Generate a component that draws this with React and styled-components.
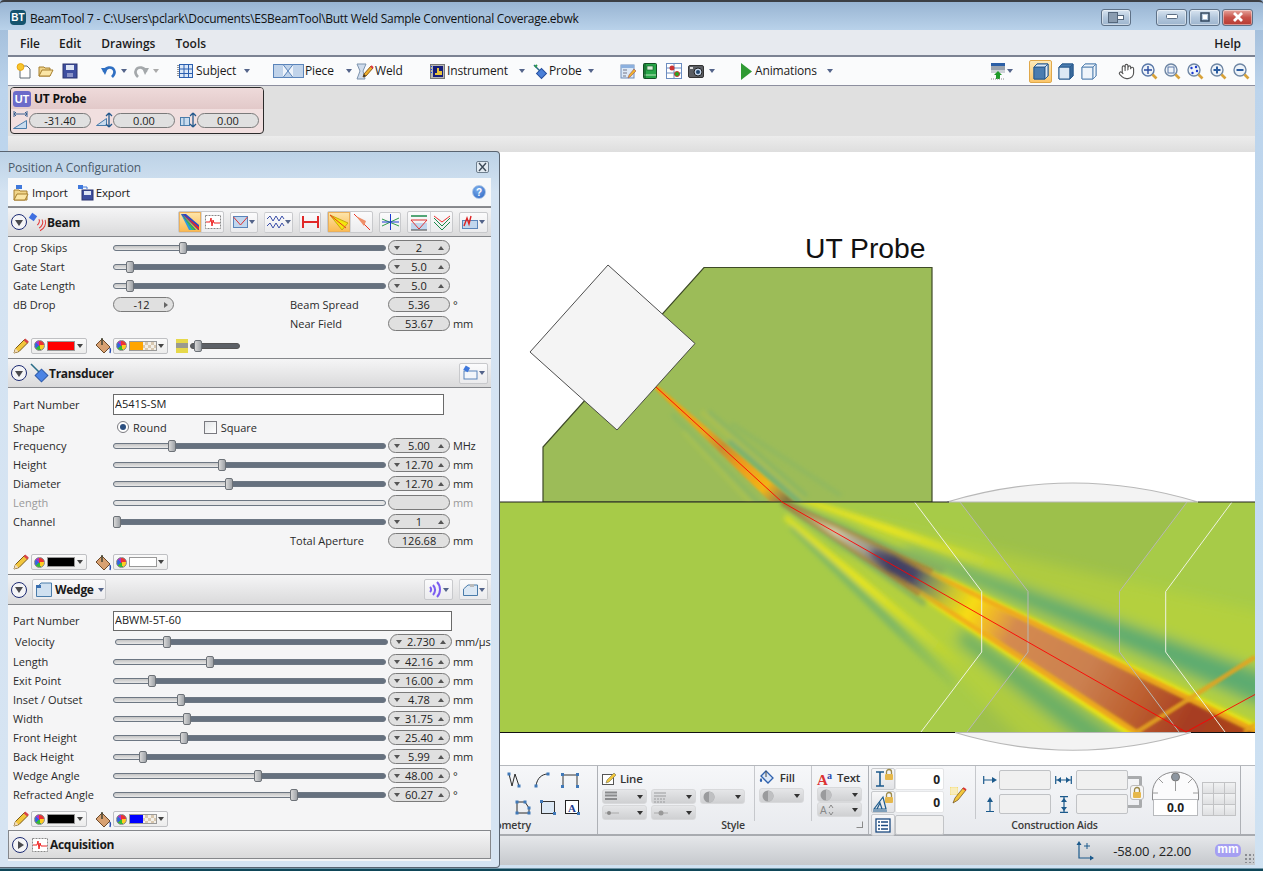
import React from "react";
import styled, { createGlobalStyle, css } from "styled-components";
import { Hand } from "lucide-react";

const Global = createGlobalStyle`
  html, body { margin: 0; padding: 0; background: #0c3a4a; }
  body { font-family: "Open Sans", "Noto Sans", "Liberation Sans", sans-serif; font-size: 11px; color: #222; }
  * { box-sizing: border-box; }
`;

const Win = styled.div`
  position: relative; width: 1263px; height: 871px; overflow: hidden; display: flex; flex-direction: column;
  background: linear-gradient(180deg, #9ab6d4 0, #bcd4ec 90px, #c4dcf2 500px, #d0e2f2 868px, #0e4658 869px);
`;
const TitleBar = styled.div`
  height: 30px; flex: none; display: flex; align-items: center; padding: 2px 10px 0 10px;
  border-top: 2px solid #3c3f44; border-radius: 4px 4px 0 0;
  background: linear-gradient(180deg, #98b4d2, #b9d2ea);
`;
const AppBadge = styled.div`
  width: 16px; height: 15px; border-radius: 4px; background: #14536e; color: #fff; font: bold 10px "Liberation Sans", sans-serif;
  display: flex; align-items: center; justify-content: center; margin-right: 4px;
`;
const TitleText = styled.div`font-size: 12px; color: #111; letter-spacing: -0.27px; white-space: nowrap; flex: 1; padding-top: 2px;`;
const CapBtn = styled.div`
  width: ${p => p.$w || 31}px; height: 17px; margin-left: ${p => p.$ml || 2}px; border: 1px solid #5e7187; border-radius: 3px;
  display: flex; align-items: center; justify-content: center;
  background: ${p => p.$close ? "linear-gradient(180deg,#e6a59c,#c8534a 50%,#b53a32)" : "linear-gradient(180deg,#d8e4f0,#b3c7dc 50%,#9db5ce)"};
  box-shadow: inset 0 0 0 1px rgba(255,255,255,.45);
`;
const Body = styled.div`flex: 1; margin: 0 8px; display: flex; flex-direction: column; min-height: 0;`;
const MenuBar = styled.div`
  height: 27px; flex: none; display: flex; align-items: center; padding: 1px 14px 0 12px; background: #e7eaef; border-bottom: 2px solid #7b8292;
`;
const MenuItem = styled.div`
  font-size: 12px; font-weight: 600; color: #1c1c1c; margin-right: ${p => p.$mr}px;
  &:last-child { margin: 0 0 0 auto; }
`;
const Toolbar = styled.div`
  height: 29px; flex: none; display: flex; align-items: center; padding-left: 8px; background: #fafbfc; border-bottom: 1px solid #8d8f9f;
`;
const ToolCell = styled.div`width: ${p => p.$w}px; flex: none; display: flex; align-items: center;`;
const ToolLabel = styled.span`font-size: 12px; color: #1a1a1a; margin: 0 0 1px ${p => p.$ml ?? 3}px; white-space: nowrap; letter-spacing: -.15px;`;
const Caret = styled.i`
  display: block; flex: none; margin-left: ${p => p.$ml || 0}px; width: 0; height: 0;
  border: 3px solid transparent; border-bottom: 0; border-top: 4px solid ${p => p.$c || "#54648a"};
`;
const ActiveCell = styled.div`
  width: 23px; height: 23px; margin-left: -2px; margin-right: 6px; flex: none; display: flex; align-items: center; justify-content: center;
  border: 1px solid #e0a84a; border-radius: 2px; background: linear-gradient(180deg,#fde9b8,#fbc569);
`;
const ProbeBar = styled.div`height: 50px; flex: none; padding: 1px 2px; background: #e0e0e0;`;
const ProbeCard = styled.div`width: 254px; height: 47px; border: 1px solid #2b2b2b; border-radius: 4px; overflow: hidden; background: #f1dfdf;`;
const ProbeHead = styled.div`height: 21px; display: flex; align-items: center; padding-left: 2px; background: linear-gradient(180deg,#eedada,#e2c9c9);`;
const UTBadge = styled.div`
  width: 18px; height: 16px; border-radius: 3px; background: #6b6bc9; color: #fff; font: bold 11px "Liberation Sans", sans-serif;
  display: flex; align-items: center; justify-content: center;
`;
const ProbeName = styled.div`font-size: 12px; font-weight: 700; margin-left: 3px; color: #111; letter-spacing: -.25px;`;
const ProbeRow = styled.div`height: 22px; display: flex; align-items: center; padding-left: 2px;`;
const ProbeGap = styled.div`width: ${p => p.$w}px; flex: none;`;
const Strip = styled.div`height: 16px; flex: none; background: linear-gradient(180deg,#ececec,#dedede);`;
const Canvas = styled.div`flex: 1; background: #fff; min-height: 0;`;
const Ribbon = styled.div`
  height: 71px; flex: none; display: flex; border-top: 1px solid #b5b8bd; border-bottom: 2px solid #a8abb0;
  background: linear-gradient(180deg,#f6f7f9,#e8eaee);
`;
const RGroup = styled.div`
  width: ${p => p.$w}px; flex: none; display: flex; flex-direction: column; border-right: 1px solid #aeb1b6;
`;
const RContent = styled.div`flex: 1; display: flex; min-height: 0;`;
const RLabel = styled.div`
  height: 16px; flex: none; font-size: 10.5px; font-weight: 600; color: #3a3a3a; text-align: center; position: relative; line-height: 15px;
  letter-spacing: -.2px; ${p => p.$pl && css`padding-left: ${p.$pl}px;`}
`;
const GeomRows = styled.div`display: flex; flex-direction: column; gap: 11px; margin: 6px 0 0 auto; padding-right: 16px;`;
const GeomRow = styled.div`display: flex; gap: ${p => p.$g || 9}px; justify-content: flex-end; align-items: center;`;
const RSub = styled.div`
  width: ${p => p.$w}px; flex: none; display: flex; flex-direction: column; padding: ${p => p.$pt || 4}px 0 0 ${p => p.$pl || 4}px;
  border-right: ${p => p.$end ? "0" : "1px solid #c6c8cc"}; height: 55px;
`;
const RHead = styled.div`display: flex; align-items: center; gap: 3px; height: 19px; font-size: 11.5px; font-weight: 600; color: #333; letter-spacing: -.2px;`;
const DropRow = styled.div`display: flex; gap: 4px; margin-top: 1px;`;
const RDrop = styled.div`
  width: 45px; height: 15px; display: flex; align-items: center; justify-content: space-between; padding: 0 3px 0 2px; border-radius: 3px;
  background: linear-gradient(180deg,#e5e6e8,#cfd0d2); border: 1px solid #d8d9db;
`;
const Launcher = styled.div`position: absolute; right: 5px; top: 3px; width: 7px; height: 7px; border: 1px solid #8a8a8a; border-top-color: transparent; border-left-color: transparent;`;
const LockCol = styled.div`display: flex; flex-direction: column; gap: 1px; padding: 2px 0 0 2px; flex: none; width: 75px;`;
const LockRow = styled.div`display: flex; align-items: center;`;
const LockBtn = styled.div`
  width: 24px; height: 22px; display: flex; align-items: center; justify-content: center; border: 1px solid #c8cacd; border-radius: 2px;
  background: linear-gradient(180deg,#f7f7f8,#e2e3e6);
`;
const NumBox = styled.div`
  width: 49px; height: ${p => p.$off ? 20 : 22}px; display: flex; align-items: center; justify-content: flex-end; padding-right: 3px; font-size: 12px; font-weight: 700;
  background: ${p => p.$off ? "#f0f0f0" : "#fff"}; border: 1px solid ${p => p.$off ? "#c2c4c7" : "#e4e5e7"}; border-radius: 2px;
`;
const PencilCell = styled.div`width: 31px; flex: none; display: flex; align-items: center; justify-content: center; height: 52px; padding: 5px 2px 0 0;`;
const SubSep = styled.div`width: 1px; height: 53px; flex: none; background: #c6c8cc;`;
const AidGrid = styled.div`display: grid; grid-template-columns: 18px 52px 25px 52px; row-gap: 4px; align-items: center; justify-items: center; padding: 4px 0 0 5px; align-self: flex-start; flex: none;`;
const AidBox = styled.div`width: 52px; height: 20px; background: #f0f0f0; border: 1px solid #c0c2c5; border-radius: 2px;`;
const Bracket = styled.div`
  position: relative; width: 14px; height: 32px; margin-top: 10px; border: 3px solid #a9abad; border-left: 0; border-radius: 0 2px 2px 0; flex: none;
`;
const LockChip = styled.div`
  position: absolute; left: 2px; top: 6px; width: 14px; height: 15px; border-radius: 3px; background: #f5f5f5; border: 1px solid #bbb; display: flex; align-items: center; justify-content: center;
`;
const Dial = styled.div`display: flex; flex-direction: column; align-items: center; width: 47px; margin: 5px 0 0 10px; flex: none;`;
const DialValue = styled.div`
  width: 45px; height: 17px; background: #fff; border: 1px solid #b8babd; font-size: 12px; font-weight: 700; text-align: center; line-height: 15px; margin-top: -1px;
`;
const GridBox = styled.div`
  width: 34px; height: 34px; margin: 16px 0 0 3px; flex: none; display: grid; grid-template: repeat(3, 1fr) / repeat(3, 1fr); gap: 1px;
  border: 1px solid #c2c3c5; background: #c2c3c5;
`;
const GridCell = styled.div`background: linear-gradient(180deg,#f0f1f2,#dfe0e2);`;
const StatusBar = styled.div`
  height: 29px; flex: none; display: flex; align-items: center; justify-content: flex-end; position: relative; padding-right: 14px;
  background: linear-gradient(180deg,#e5e7ea,#c6c9cd);
`;
const StatusText = styled.div`font-size: 13px; color: #222; margin: 0 24px 0 19px; letter-spacing: -.2px; white-space: nowrap;`;
const UnitPill = styled.div`
  width: 26px; height: 13px; border-radius: 5px; background: #a59ff2; color: #fff; font: bold 12px "Liberation Sans", sans-serif; line-height: 11px; text-align: center;
`;
const Grip = styled.div`
  position: absolute; right: 1px; bottom: 2px; width: 10px; height: 10px;
  background-image: radial-gradient(#8a8d92 1px, transparent 1.2px); background-size: 4px 4px;
`;
const BottomFrame = styled.div`height: 6px; flex: none;`;

/* floating panel */
const Panel = styled.div`
  position: absolute; left: 0; top: 151px; width: 500px; height: 717px; padding: 0 8px; display: flex; flex-direction: column;
  border: 1px solid #5a6470; border-width: 1px 1px 1px 0; border-radius: 0 4px 4px 0;
  background: linear-gradient(180deg,#bcd2e6,#d4e3f2 40px,#d6e4f2);
`;
const PanelTitle = styled.div`height: 26px; flex: none; display: flex; align-items: center; justify-content: space-between; font-size: 12px; color: #4b5b6b; letter-spacing: -.1px; padding: 4px 2px 0 0;`;
const CloseX = styled.div`width: 13px; height: 12px; border: 1px solid #6e7f8f; border-radius: 2px; background: #e3ebf2; display: flex; align-items: center; justify-content: center;`;
const PanelBody = styled.div`flex: 1; background: #f5f5f6; display: flex; flex-direction: column; min-height: 0;`;
const ImportBar = styled.div`height: 28px; margin-bottom: 1px; flex: none; display: flex; align-items: center; padding: 0 5px; gap: 2px; background: #f8f9fa; box-shadow: 0 1px 0 #8a8c90; font-size: 11.5px; color: #222;`;
const BarLabel = styled.span`margin-right: 7px; letter-spacing: -.15px;`;
const HelpDot = styled.div`
  margin-left: auto; width: 14px; height: 14px; border-radius: 50%; background: radial-gradient(circle at 40% 30%, #7cb0ee, #2a62c0); color: #fff;
  font: bold 10px "Liberation Sans", sans-serif; display: flex; align-items: center; justify-content: center; border: 1px solid #a9c4e6;
`;
const SectionHead = styled.div`
  height: ${p => p.$h || 30}px; flex: none; display: flex; align-items: center; padding: 0 3px 0 3px;
  background: linear-gradient(180deg,#f5f5f6,#dadadb); border: solid #85878b; border-width: 1px ${p => p.$box ? 1 : 0}px 1px ${p => p.$box ? 1 : 0}px;
`;
const Toggle = styled.div`
  width: 16px; height: 16px; border-radius: 50%; border: 1.5px solid #1c2a72; flex: none; background: #f4f4f6; display: flex; align-items: center; justify-content: center; margin-right: 3px;
`;
const ToggleMark = styled.i`
  display: block; width: 0; height: 0; border: solid transparent;
  ${p => p.$open ? css`border-width: 6px 4.5px 0; border-top-color: #4a4a4e; margin-top: 1px;` : css`border-width: 4.5px 0 4.5px 6px; border-left-color: #4a4a4e; margin-left: 1px;`}
`;
const SectionTitle = styled.div`font-size: 12px; font-weight: 700; color: #1a1a1a; margin-left: ${p => p.$ml ?? 1}px; white-space: nowrap; letter-spacing: -.3px;`;
const HeadTools = styled.div`margin-left: auto; display: flex; align-items: center; gap: 6px;`;
const BtnGroup = styled.div`display: flex; border: 1px solid #c8c9cc; border-radius: 2px; background: linear-gradient(180deg,#fbfbfc,#ebebed);`;
const ToolBtn = styled.div`
  height: 20px; width: ${p => p.$w || 22}px; display: flex; align-items: center; justify-content: center; gap: 1px; flex: none;
  ${p => p.$single && css`border: 1px solid #c8c9cc; border-radius: 2px; height: 21px; background: linear-gradient(180deg,#fbfbfc,#ebebed);`}
  ${p => p.$on && css`background: linear-gradient(180deg,#fde6ad,#fbb94f); box-shadow: inset 0 0 0 1px #eab05c;`}
  & + & { border-left: 1px solid #d4d5d8; }
`;
const WedgeBtn = styled.div`
  display: flex; align-items: center; width: 74px; height: 21px; margin-left: 2px; padding-left: 3px; border: 1px solid #c8c9cc; border-radius: 2px; background: linear-gradient(180deg,#fbfbfc,#ebebed);
`;
const Rows = styled.div`display: flex; flex-direction: column; padding-top: ${p => p.$pt || 0}px; flex: none;`;
const Row = styled.div`
  height: ${p => p.$h || 19}px; display: flex; align-items: center; padding-left: ${p => p.$pl || 5}px; flex: none;
  color: ${p => p.$off ? "#9a9a9a" : "#2a2a2a"};
`;
const Label = styled.div`width: 100px; flex: none; font-size: 11px; white-space: nowrap;`;
const Mid = styled.div`width: 273px; flex: none; display: flex; align-items: center;`;
const SideLabel = styled.div`margin-left: auto; width: 96px; font-size: 11px;`;
const Slider = styled.div`position: relative; width: 273px; height: 6px; flex: none; border-radius: 3px; border: 1px solid #6d7783; background: ${p => p.$off ? "#e4e4e4" : "#66717f"}; overflow: visible;`;
const SliderLow = styled.div`position: absolute; left: 0; top: 0; bottom: 0; border-radius: 3px 0 0 3px; background: linear-gradient(180deg,#c4c4c4,#e8e8e8);`;
const Thumb = styled.div`
  position: absolute; top: -4px; width: 8px; height: 12px; margin-left: -4px; border: 1px solid #6d7278; border-radius: 2px; background: linear-gradient(90deg,#d8d8d8,#9fa3a8);
`;
const Pill = styled.div`
  width: ${p => p.$w || 62}px; height: 15px; flex: none; display: flex; align-items: center; justify-content: space-between; padding: 0 5px; margin-left: ${p => p.$ml ?? 2}px;
  border: 1px solid #7a7a7a; border-radius: 8px; background: #e0e0e0; font-size: 11px; color: ${p => p.$off ? "#999" : "#222"};
`;
const PillValue = styled.span`flex: 1; text-align: center;`;
const Unit = styled.div`margin-left: 3px; font-size: 11px; white-space: nowrap; letter-spacing: -.2px;`;
const TextField = styled.input`
  width: ${p => p.$w}px; height: ${p => p.$h || 21}px; border: 1px solid #6a6a6a; background: #fff; font: 11px "Open Sans", sans-serif; padding: 0 0 2px 1px; color: #222; flex: none; border-radius: 0; outline: none;
`;
const ChoiceRow = styled.div`display: flex; align-items: center;`;
const Radio = styled.div`width: 12px; height: 12px; border-radius: 50%; border: 1px solid #7a7a80; background: #fff; margin-left: 4px; display: flex; align-items: center; justify-content: center;`;
const RadioDot = styled.i`width: 6px; height: 6px; border-radius: 50%; background: #2b4f80; display: block;`;
const Check = styled.div`width: 13px; height: 13px; border: 1px solid #7a7a80; background: linear-gradient(135deg,#e4e6e8,#fff); margin-left: 37px;`;
const ChoiceText = styled.span`margin-left: 4px; font-size: 11px;`;
const ColorRow = styled.div`height: ${p => p.$h || 24}px; display: flex; align-items: center; padding: ${p => p.$pt || 0}px 0 0 5px; flex: none;`;
const ColorBtn = styled.div`
  width: ${p => p.$w || 56}px; height: 16px; margin: 0 8px 0 2px; display: flex; align-items: center; padding: 0 3px 0 2px; flex: none;
  border: 1px solid #bfc0c3; border-radius: 2px; background: linear-gradient(180deg,#fafafa,#ececec);
`;
const Wheel = styled.div`
  width: 11px; height: 11px; border-radius: 50%; flex: none; background: conic-gradient(#e33 0 25%, #fc2 0 45%, #3b3 0 65%, #36d 0 85%, #a3c 0); border: 1px solid #888;
`;
const Swatch = styled.div`
  width: 28px; height: 10px; margin-left: 2px; flex: none; border: 1px solid #999; background: ${p => p.$c};
`;
const SwatchHalf = styled.div`
  width: 28px; height: 10px; margin-left: 2px; flex: none; border: 1px solid #999;
  background: linear-gradient(90deg, ${p => p.$c} 50%, transparent 50%), repeating-conic-gradient(#d8c8b0 0 25%, #f3efe8 0 50%) 0 0 / 6px 6px;
`;
const MiniSlider = styled.div`position: relative; width: 50px; height: 6px; margin-left: 2px; border-radius: 3px; background: #5c6066; border: 1px solid #555;`;
const Spacer = styled.div`flex: 1;`;

/* ---------- drawn icons ---------- */
const Sv = styled.svg`display: block; flex: none; overflow: visible; ${p => p.$ml && css`margin-left: ${p.$ml}px;`}`;
const I = ({ w = 16, h = 16, ml, children }) => <Sv width={w} height={h} viewBox={`0 0 ${w} ${h}`} $ml={ml}>{children}</Sv>;

const NewDoc = () => <I><path d="M4 3h7l3 3v9H4z" fill="#fff" stroke="#5f6a74" /><circle cx="4.5" cy="4" r="3.4" fill="#f7c62e" stroke="#e9a50e" /></I>;
const OpenFolder = ({ ml }) => <I ml={ml}><path d="M1 4h5l1 1h5v8H1z" fill="#f1d58a" stroke="#a67f2e" /><path d="M1 13l3-6h11l-3 6z" fill="#fbe6a6" stroke="#a67f2e" /></I>;
const Save = () => <I><rect x="1" y="1" width="14" height="14" fill="#3e4fa0" stroke="#2a356f" /><rect x="4" y="2" width="8" height="5" fill="#dfe6f5" /><rect x="5" y="10" width="6" height="4" fill="#8a93c8" /></I>;
const Undo = ({ c = "#2f6fc2" }) => <I><path d="M3 9c1-5 8-6 10-2 1 2 0 5-2 7" fill="none" stroke={c} strokeWidth="2.6" /><path d="M0 5l7 0-3 7z" fill={c} /></I>;
const Redo = () => <I><path d="M13 9c-1-5-8-6-10-2-1 2 0 5 2 7" fill="none" stroke="#a4a8ab" strokeWidth="2.6" /><path d="M16 5l-7 0 3 7z" fill="#a4a8ab" /></I>;
const SubjectIco = () => <I><rect x="1.5" y="1.5" width="13" height="13" fill="#dbe8f8" stroke="#2b5fb0" /><path d="M1 6h14M1 10.5h14M6 1v14M10.5 1v14" stroke="#2b5fb0" /><path d="M0 2v12" stroke="#333" strokeDasharray="1 1" /></I>;
const PieceIco = () => <I w={31} h={14}><rect x=".5" y=".5" width="30" height="13" fill="#c0d3ea" stroke="#5a84ba" /><path d="M10 .5l5 6.5-5 6.5M20 .5l-5 6.5 5 6.5" fill="#eef3fa" stroke="#5a84ba" /></I>;
const WeldIco = () => <I w={18} h={17}><path d="M1 1h9L7 8l2 8H1l3-8z" fill="#cfdcec" stroke="#7d93ad" /><path d="M7 14l1-3 7-8 2 2-7 8z" fill="#f1b22d" stroke="#8d5a17" /><path d="M7 14l1-3 2 2z" fill="#333" /><path d="M15 3l2 2" stroke="#d34" strokeWidth="2" /></I>;
const InstrumentIco = () => <I w={15} h={15}><rect x=".5" y=".5" width="14" height="14" fill="#b7b7b2" stroke="#777" /><rect x="3" y="2" width="10" height="11" fill="#141d7a" /><path d="M5 11h7V7H9V4H7v5H5z" fill="#e8c33a" /><path d="M1.5 2v1M1.5 5v1M1.5 8v1" stroke="#14f" /></I>;
const ProbeIco = () => <I w={15} h={15}><path d="M1 1l6 6" stroke="#2a6d88" strokeWidth="1.5" /><rect x="5" y="6" width="7" height="7" transform="rotate(45 8.5 9.5)" fill="#4b80d8" stroke="#2750a0" /><path d="M2 3l2-2" stroke="#2c9a4a" strokeWidth="2" /></I>;
const NotesIco = () => <I><rect x="1" y="2" width="13" height="13" fill="#dce8f6" stroke="#6c8cb8" /><rect x="1" y="2" width="13" height="3" fill="#8cb0de" /><path d="M3 7h4M3 10h4M3 13h3" stroke="#778" /><path d="M8 15l1-3 5-6 2 2-6 6z" fill="#f1b22d" stroke="#955" strokeWidth=".6" /></I>;
const BookIco = () => <I w={14} h={16}><rect x=".5" y=".5" width="13" height="15" rx="1" fill="#27a648" stroke="#124d22" /><rect x="4" y="3" width="6" height="4" fill="#d8f0d8" stroke="#124d22" strokeWidth=".6" /><path d="M1 12h12" stroke="#bfe8bf" /><path d="M2 .5v15" stroke="#124d22" /></I>;
const ChartIco = () => <I><rect x=".5" y=".5" width="15" height="15" fill="#fff" stroke="#6b8cc0" /><path d="M0 5h16M8 0v16M0 10h16" stroke="#6b8cc0" /><circle cx="6" cy="5" r="2.5" fill="#c33" /><circle cx="11" cy="11" r="2.5" fill="#2a2" stroke="#c33" /></I>;
const CameraIco = () => <I><rect x=".5" y="2.5" width="15" height="12" rx="1.5" fill="#5b5e63" stroke="#333" /><circle cx="10" cy="9" r="4" fill="#c5d4e8" stroke="#222" /><circle cx="10" cy="9" r="2" fill="#24476e" /><rect x="2" y="4" width="3" height="2" fill="#ddd" /></I>;
const PlayIco = () => <I w={11} h={17}><path d="M0 0l11 8.5L0 17z" fill="#2f9a33" /></I>;
const LayerIco = () => <I w={14} h={17}><rect y="0" width="14" height="3" fill="#2b5fa6" /><rect y="3" width="14" height="4" fill="#9aa3ae" /><rect y="7" width="14" height="3" fill="#ccd1d7" /><path d="M7 8l4 4H9v4H5v-4H3z" fill="#1e9a28" /><path d="M0 16h14" stroke="#888" strokeDasharray="1 1" /></I>;
const Cube = ({ front = "#4a7cb0", top = "#dce8f4", side = "#dce8f4", stroke = "#2a5c90" }) => (
  <I w={16} h={17}><path d="M4 1h11v12l-3 3H1V4z" fill={side} stroke={stroke} /><path d="M1 4h11v12H1z" fill={front} stroke={stroke} /><path d="M1 4l3-3h11l-3 3z" fill={top} stroke={stroke} /><path d="M12 4l3-3v12l-3 3z" fill={side} stroke={stroke} /></I>
);
const Magnifier = ({ children, ring = "#6e86a4" }) => <I w={17} h={17}><circle cx="7" cy="7" r="6" fill="#eef3f9" stroke={ring} strokeWidth="1.4" /><path d="M11.5 11.5l4 4" stroke="#d8a23a" strokeWidth="2.6" />{children}</I>;
const BeamIco = () => <I w={16} h={18}><rect x="0" y="1" width="6" height="6" transform="rotate(35 3 4)" fill="#3f6fe0" /><path d="M8 6c2 1 2 4 1 6M11 5c3 2 3 6 1 9M14 4c3 3 3 8 0 12" fill="none" stroke="#e23a3a" strokeWidth="1" transform="rotate(25 8 8)" /></I>;
const TransducerIco = () => <I w={18} h={20}><path d="M1 1l8 8" stroke="#2a6d88" strokeWidth="1.6" /><rect x="7" y="8" width="9" height="9" transform="rotate(45 11.5 12.5)" fill="#4c84e4" stroke="#2b58a8" /></I>;
const SigIco = ({ w = 18 }) => <I w={w} h={16}><rect x="1.5" y="1.5" width={w - 3} height="13" fill="#fff" stroke="#888" strokeDasharray="2 1" /><path d={`M2 8h4l1-4 1 8 1-6 1 3h${w - 12}`} fill="none" stroke="#e22" /></I>;
const FanIco = () => <I w={18} h={16}><path d="M0 0l5 0 13 11v5H10z" fill="#2a48c8" /><path d="M0 0l8 16h4z" fill="#2c9ce0" /><path d="M1 0l10 16h3z" fill="#32c050" /><path d="M1 0l14 16h2z" fill="#f2d818" /><path d="M2 0l16 16v-3z" fill="#e22" /></I>;
const VIco = () => <I w={15} h={12}><rect x=".5" y=".5" width="14" height="11" fill="#c0d6ee" stroke="#5a84ba" /><path d="M.5 1l7 8 7-8" fill="none" stroke="#d33" /></I>;
const WaveIco = () => <I w={17} h={13}><path d="M0 3l3-3 3 5 3-5 3 5 3-5 2 3M0 10l3-3 3 5 3-5 3 5 3-5 2 3" fill="none" stroke="#3a4ea8" /></I>;
const RedH = () => <I w={17} h={12}><path d="M1 0v12M16 0v12M1 6h15" stroke="#e02828" strokeWidth="2" /></I>;
const ConeA = () => <I w={18} h={15}><path d="M0 0l18 8-6 7z" fill="#f3e60d" stroke="#c8a80f" /><path d="M0 0l16 13" stroke="#e32" /></I>;
const ConeB = () => <I w={18} h={16}><path d="M1 0l16 16" stroke="#e32" /><path d="M3 2l10 5-2 5z" fill="#ef8e68" /></I>;
const Cross = () => <I w={17} h={16}><path d="M0 5l17 7M0 12l17-8" stroke="#2c9a4a" /><path d="M8.5 0v16M0 8h17" stroke="#1a38d0" /></I>;
const VBoxA = () => <I w={16} h={15}><path d="M0 1h16" stroke="#1c8a4a" strokeWidth="1.5" /><rect y="8" width="16" height="7" fill="#c0d6ee" /><path d="M0 5h16l-8 9z" fill="none" stroke="#d33" /><path d="M0 15h16" stroke="#444" /></I>;
const VBoxB = () => <I w={16} h={15}><path d="M0 1l8 6 8-6" fill="none" stroke="#e33" /><path d="M0 3l8 8 8-8M0 7l8 8 8-8" fill="none" stroke="#1c8a4a" /></I>;
const RaysIco = () => <I w={16} h={13}><rect x=".5" y="4.5" width="15" height="8" fill="#c0d6ee" stroke="#5a84ba" /><path d="M2 10l3-8 2 6 2-8" fill="none" stroke="#d22" strokeWidth="1.4" /></I>;
const TransTool = () => <I w={15} h={14}><rect x="1" y="5" width="13" height="8" fill="#f3f6fa" stroke="#5a84ba" /><rect x="1" y="0" width="5" height="5" transform="rotate(30 3 3)" fill="#3f78dc" /></I>;
const WedgeIco = () => <I w={16} h={15}><path d="M.5 14.5V6L5 1h10.5v13.5z" fill="#cfe0f0" stroke="#4a7caa" /><path d="M0 3h5v3H0z" fill="#3a6fb0" /></I>;
const SoundIco = () => <I w={13} h={15}><path d="M1 5c1.5 1.5 1.5 3.500 0 5M4 3c2.500 3 2.500 7 0 10M8 0c4 4 4 11 0 15" fill="none" stroke="#7a5cf0" strokeWidth="2" /></I>;
const WedgeTool = () => <I w={15} h={13}><path d="M.5 12.500V6L5 2h9.500v10.500z" fill="#dce8f4" stroke="#4a7caa" /><path d="M7 1h4v3H7z" fill="#bbb" /></I>;
const Pencil = () => <I><path d="M1 15l1.500-4.500 9-9 3.500 3-9 9z" fill="#f2c63c" stroke="#7a5a18" /><path d="M1 15l1.500-4.500 3 3z" fill="#f3dcb8" /><path d="M11.500 1.500l3.500 3" stroke="#d8434a" strokeWidth="2.400" /></I>;
const Bucket = () => <I w={16} h={17}><path d="M7 2l8 8-6 6-8-8z" fill="#d8a172" stroke="#6d4a2a" /><path d="M7 1v7" stroke="#443" strokeWidth="1.500" /><path d="M15 11c1 2 0 5 0 5" stroke="#2a4cb0" strokeWidth="1.500" fill="none" /></I>;
const Folder2 = () => <I w={17} h={17}><rect x="3" y="1" width="6" height="4" fill="#3f78dc" /><path d="M1 6h5l1 1h7v9H1z" fill="#f1d58a" stroke="#a67f2e" /><path d="M1 16l3-6h11l-3 6z" fill="#fbe6a6" stroke="#a67f2e" /></I>;
const Export = () => <I w={17} h={17}><rect x="1" y="1" width="5" height="4" fill="#3f78dc" /><rect x="5" y="6" width="11" height="10" fill="#3e4fa0" stroke="#2a356f" /><rect x="7" y="7" width="7" height="4" fill="#dfe6f5" /><path d="M6 3h4v2" fill="none" stroke="#3f78dc" /></I>;
const OpacityIco = () => <I w={12} h={14}><rect width="12" height="14" fill="#9a9a90" /><rect y="9" width="12" height="5" fill="#e6d84a" /><rect y="0" width="12" height="4" fill="#e6d84a" /></I>;
const Arrows1 = () => <I w={15} h={18}><path d="M1 3h13M1 3l2-2M1 3l2 2M14 3l-2-2M14 3l-2 2M1 0v6M14 0v6" fill="none" stroke="#3a6090" /><path d="M.5 17.500l13-8v8z" fill="#c9dbee" stroke="#4a7caa" /></I>;
const Arrows2 = () => <I w={17} h={16}><path d="M.5 13.500l10-7v7z" fill="#c9dbee" stroke="#4a7caa" /><path d="M13 1v14M13 1l-3 3M13 1l3 3M13 15l-3-3M13 15l3-3" fill="none" stroke="#23588c" strokeWidth="1.300" /></I>;
const Arrows3 = () => <I w={17} h={16}><rect x=".5" y="5.500" width="9" height="8" fill="#c9dbee" stroke="#4a7caa" /><path d="M4 5.500v8" stroke="#4a7caa" /><path d="M13 1v14M13 1l-3 3M13 1l3 3M13 15l-3-3M13 15l3-3" fill="none" stroke="#23588c" strokeWidth="1.300" /></I>;

const GeomDraw = ({ d, nodes }) => <I w={16} h={16}><path d={d} fill="none" stroke="#2a2a2a" strokeWidth="1" />{nodes.map(([x, y]) => <rect key={x + "," + y} x={x - 1.5} y={y - 1.5} width="3" height="3" fill="#3f78b8" />)}</I>;
const LineIco = () => <I w={15} h={14}><rect x=".5" y="2.500" width="11" height="10" fill="#fff" stroke="#555" /><path d="M4 11l1-3 7-7 2 2-7 7z" fill="#f2c63c" stroke="#775" strokeWidth=".6" /></I>;
const FillIco = () => <I w={15} h={15}><path d="M7 1l7 7-5 5-7-7z" fill="#dce8f8" stroke="#2f62ae" strokeWidth="1.300" /><path d="M7 1v6" stroke="#444" /><path d="M2 8c-2 2-1 4 0 4s2-2 0-4z" fill="#2f62ae" /></I>;
const TextIco = () => <Sv width="17" height="18" viewBox="0 0 17 18"><text x="0" y="16" fontFamily="Liberation Serif" fontSize="15" fill="#d33" fontWeight="700">A</text><text x="10" y="10" fontFamily="Liberation Serif" fontSize="10" fill="#2a4cb0" fontWeight="700">a</text></Sv>;
const Ball = () => <I w={12} h={12}><circle cx="6" cy="6" r="5.500" fill="#9a9b9d" /><path d="M6 .5a5.500 5.500 0 0 1 0 11z" fill="#bfc0c2" /></I>;
const Bars = () => <I w={12} h={12}><path d="M0 1.500h12M0 4.500h12M0 8h12" stroke="#8a8b8d" strokeWidth="2" /></I>;
const Dashes = () => <I w={12} h={12}><path d="M0 2h12M0 5h12" stroke="#9a9b9d" /><path d="M0 8h12M0 11h12" stroke="#9a9b9d" strokeDasharray="2 1" /></I>;
const NodeLine = () => <I w={14} h={12}><path d="M0 6h14" stroke="#aaa" /><circle cx="4" cy="6" r="2" fill="#888" /></I>;
const NodeMid = () => <I w={14} h={12}><path d="M0 6h14" stroke="#aaa" /><circle cx="7" cy="6" r="2.500" fill="#999" /></I>;
const AZ = () => <Sv width="13" height="12" viewBox="0 0 13 12"><text x="0" y="10" fontFamily="Liberation Sans" fontSize="10" fill="#888">A</text><path d="M9 4l2-3 2 3M9 8l2 3 2-3" fill="none" stroke="#888" /></Sv>;
const Lock = () => <I w={10} h={11}><path d="M2.500 5V3a2.500 2.500 0 0 1 5 0v2" fill="none" stroke="#9c8a4a" strokeWidth="1.300" /><rect x="1" y="5" width="8" height="6" rx="1" fill="#e6b84c" /></I>;
const IBeamLock = () => <I w={22} h={20}><path d="M8 3v14M4 3h8M4 17h8" stroke="#1c5a8c" strokeWidth="1.600" /><g transform="translate(12 0)"><path d="M2.500 5V3a2.500 2.500 0 0 1 5 0v2" fill="none" stroke="#9c8a4a" strokeWidth="1.300" /><rect x="1" y="5" width="8" height="6" rx="1" fill="#e6b84c" /></g></I>;
const TriLock = () => <I w={22} h={20}><path d="M2 17L11 5l3 12zM5 17l3-6 2 6" fill="none" stroke="#1c5a8c" strokeWidth="1.200" /><path d="M1 19h14" stroke="#1c5a8c" /><g transform="translate(12 0)"><path d="M2.500 5V3a2.500 2.500 0 0 1 5 0v2" fill="none" stroke="#9c8a4a" strokeWidth="1.300" /><rect x="1" y="5" width="8" height="6" rx="1" fill="#e6b84c" /></g></I>;
const ListIco = () => <I w={16} h={16}><rect x="1" y="2" width="14" height="13" fill="#fff" stroke="#1c4a80" strokeWidth="1.300" /><path d="M3 5h2M3 8.500h2M3 12h2M6 5h7M6 8.500h7M6 12h7" stroke="#1c4a80" strokeWidth="1.500" /></I>;
const StarPencil = () => <I w={18} h={18}><rect x="0" y="1" width="8" height="8" fill="#f3dc78" /><path d="M0 3h8M0 5h8M0 7h8M2 1v8M4 1v8M6 1v8" stroke="#fff" strokeWidth=".6" /><path d="M3 17l2-5 8-10 3 2-8 10z" fill="#f2c63c" stroke="#6a4a18" strokeWidth=".7" /><path d="M13 2l3 2" stroke="#d33" strokeWidth="2" /></I>;
const ArrowRight = () => <I w={14} h={10}><path d="M.7 1v8M1 5h9" stroke="#1c5a8c" strokeWidth="1.200" /><path d="M9 2l5 3-5 3z" fill="#1c5a8c" /></I>;
const ArrowBoth = () => <I w={17} h={10}><path d="M.7 1v8M16.300 1v8M1 5h15" stroke="#1c5a8c" strokeWidth="1.200" /><path d="M2 5l4-3v6zM15 5l-4-3v6z" fill="#1c5a8c" /></I>;
const ArrowUp = () => <I w={10} h={15}><path d="M5 4v11M1 14.500h8" stroke="#1c5a8c" strokeWidth="1.200" /><path d="M5 0l3 5H2z" fill="#1c5a8c" /></I>;
const ArrowUD = () => <I w={10} h={17}><path d="M1 .7h8M1 16.300h8M5 1v15" stroke="#1c5a8c" strokeWidth="1.200" /><path d="M5 2l3 4H2zM5 15l3-4H2z" fill="#1c5a8c" /></I>;
const Protractor = () => <I w={47} h={29}><path d="M.5 29V22C.5 10 10 1 23.500 1S46.500 10 46.500 22v7z" fill="#fbfbfc" stroke="#8c8c8e" /><circle cx="23.500" cy="6" r="4" fill="#8d96a0" stroke="#777" /><path d="M23.500 10v10M0 22h6M41 22h6M7 8l4 4M40 8l-4 4" stroke="#9a9a9a" /></I>;
const CoordIco = () => <I w={18} h={20}><path d="M3 2v15h14" fill="none" stroke="#1c5a8c" strokeWidth="1.200" /><path d="M3 0l2.500 4h-5zM18 17l-4 2.500v-5z" fill="#1c5a8c" /><path d="M11 2v6M8 5h6" stroke="#1c5a8c" /></I>;

const UpTri = styled.i`display: block; width: 0; height: 0; border: 3px solid transparent; border-top: 0; border-bottom: 4px solid #555;`;
const RightTri = styled.i`display: block; width: 0; height: 0; border: 3px solid transparent; border-right: 0; border-left: 4px solid #666;`;

const Slide = ({ pos, off }) => (
  <Slider $off={off}>
    {!off && <SliderLow style={{ width: `${pos - 1}px` }} />}
    {!off && <Thumb style={{ left: `${pos - 1}px` }} />}
  </Slider>
);
const SpinBtn = ({ v, off }) => (
  <Pill $off={off}>
    {!off && <Caret $c="#555" />}
    <PillValue>{v}</PillValue>
    {!off && <UpTri />}
  </Pill>
);
const SliderRow = ({ label, x, v, unit, pl, h, off, base = 113 }) => (
  <Row $pl={pl} $off={off} $h={h}>
    <Label>{label}</Label>
    <Slide pos={x - base} off={off} />
    <SpinBtn v={v} off={off} />
    <Unit>{unit}</Unit>
  </Row>
);
const ValueRow = ({ label, v, unit }) => (
  <Row>
    <Label />
    <Mid><SideLabel>{label}</SideLabel></Mid>
    <Pill><PillValue>{v}</PillValue></Pill>
    <Unit>{unit}</Unit>
  </Row>
);

const band = (c1, m1, c2, m2, u0 = 0, L = 700) =>
  `${u0},${c1 + m1 * u0} ${L},${c1 + m1 * L} ${L},${c2 + m2 * L} ${u0},${c2 + m2 * u0}`;

const Drawing = () => (
  <svg width="1247" height="613" viewBox="8 152 1247 613" style={{ display: "block" }}>
    <defs>
      <clipPath id="pieceClip"><rect x="8" y="503" width="1247" height="229" /></clipPath>
      <clipPath id="wedgeClip"><polygon points="543,502 543,447 704,268 932,268 932,502" /></clipPath>
      {[0.7, 1, 1.5, 2, 2.5, 3, 7].map(s => (
        <filter key={s} id={`bl${String(s).replace(".", "_")}`} filterUnits="userSpaceOnUse" x="-800" y="-800" width="2400" height="2400">
          <feGaussianBlur stdDeviation={s} />
        </filter>
      ))}
      <linearGradient id="core" gradientUnits="userSpaceOnUse" x1="0" y1="0" x2="600" y2="0">
        <stop offset="0" stopColor="#8a7a40" />
        <stop offset=".04" stopColor="#a89860" />
        <stop offset=".1" stopColor="#cfc8a8" />
        <stop offset=".16" stopColor="#a09c90" />
        <stop offset=".21" stopColor="#454264" />
        <stop offset=".25" stopColor="#4e4a68" />
        <stop offset=".28" stopColor="#84905c" />
        <stop offset=".32" stopColor="#c8c432" />
        <stop offset=".36" stopColor="#f8dc10" />
        <stop offset=".40" stopColor="#eeb42c" />
        <stop offset=".44" stopColor="#d48a50" />
        <stop offset=".58" stopColor="#cb8050" />
        <stop offset=".68" stopColor="#bd6030" />
        <stop offset=".77" stopColor="#a63c22" />
        <stop offset=".86" stopColor="#ab441a" />
        <stop offset="1" stopColor="#c06a10" />
      </linearGradient>
      <linearGradient id="wedgeCore" gradientUnits="userSpaceOnUse" x1="0" y1="0" x2="172" y2="0">
        <stop offset="0" stopColor="#f0a010" />
        <stop offset=".38" stopColor="#e8a820" />
        <stop offset=".52" stopColor="#c89030" />
        <stop offset=".66" stopColor="#ea9c1c" />
        <stop offset=".86" stopColor="#f2b418" />
        <stop offset=".95" stopColor="#b09040" />
        <stop offset="1" stopColor="#8a7a40" />
      </linearGradient>
      <linearGradient id="lobeFade" gradientUnits="userSpaceOnUse" x1="0" y1="0" x2="240" y2="0">
        <stop offset="0" stopColor="#f0e818" stopOpacity=".75" />
        <stop offset=".45" stopColor="#f0e818" stopOpacity=".85" />
        <stop offset="1" stopColor="#f0e818" stopOpacity="0" />
      </linearGradient>
      <linearGradient id="tealFade" gradientUnits="userSpaceOnUse" x1="0" y1="0" x2="260" y2="0">
        <stop offset="0" stopColor="#6fb070" stopOpacity=".7" />
        <stop offset=".6" stopColor="#6fb070" stopOpacity=".7" />
        <stop offset="1" stopColor="#6fb070" stopOpacity="0" />
      </linearGradient>
      <linearGradient id="yellowIn" gradientUnits="userSpaceOnUse" x1="125" y1="0" x2="195" y2="0">
        <stop offset="0" stopColor="#f2e40c" stopOpacity="0" />
        <stop offset="1" stopColor="#f2e40c" stopOpacity=".95" />
      </linearGradient>
      <linearGradient id="stripIn" gradientUnits="userSpaceOnUse" x1="125" y1="0" x2="200" y2="0">
        <stop offset="0" stopColor="#f0a418" stopOpacity="0" />
        <stop offset="1" stopColor="#f0a418" stopOpacity=".75" />
      </linearGradient>
    </defs>

    <polygon points="543,502 543,447 704,267.500 932,267.500 932,502" fill="#9cbc58" stroke="#3e4a28" strokeWidth="1.200" />
    <g clipPath="url(#wedgeClip)">
      <g transform="translate(656,387) rotate(42.4)">
        <g filter="url(#bl2)">
          <polygon points={band(-13, -.16, -9, -.16, 80, 210)} fill="#6fae74" opacity=".3" />
          <polygon points={band(-17, -.03, -14, -.03, 55, 185)} fill="#6fae74" opacity=".5" />
          <polygon points={band(-13, -.02, -10, -.02, 50, 185)} fill="#c9c83c" opacity=".45" />
          <polygon points={band(-9, -.03, -6, -.02, 90, 185)} fill="#4ea488" opacity=".65" />
          <polygon points={band(6, .055, 9, .06, 30, 185)} fill="#6fae74" opacity=".4" />
          <polygon points={band(10, .07, 12, .08, 50, 185)} fill="#c9d040" opacity=".35" />
        </g>
        <g filter="url(#bl1)">
          <polygon points={band(-2, -.035, 2, .035, 0, 185)} fill="url(#wedgeCore)" />
        </g>
      </g>
    </g>
    <polygon points="608,265 695,343.500 617,430 530,352" fill="#f4f4f4" stroke="#3a3a3a" strokeWidth=".9" />

    <rect x="8" y="502" width="1247" height="230.500" fill="#a7cb48" />
    <polygon points="960,502 1028,591.500 1028,652 967,732 1179,732 1119.500,652 1119.500,591.500 1187,502" fill="#8fae50" opacity=".4" />
    <g clipPath="url(#pieceClip)">
      <g transform="translate(782,502) rotate(29.65)">
        <g filter="url(#bl7)">
          <polygon points={band(0, -.3, 0, .27, 80)} fill="#bcd436" opacity=".6" />
          <polygon points={band(0, -.18, 0, -.115, 130)} fill="#54a876" opacity=".9" />
          <polygon points={band(0, .09, 0, .16, 220)} fill="#58a872" opacity=".8" />
        </g>
        <g filter="url(#bl2_5)">
          <polygon points={band(10, .24, 14, .27, 20, 240)} fill="url(#tealFade)" />
          <polygon points={band(7, .175, 12, .2, 10, 240)} fill="url(#lobeFade)" />
          <polygon points={band(-12, -.2, -7, -.17, 15, 240)} fill="url(#lobeFade)" />
          <polygon points={band(-3, -.12, 3, .1, 0, 175)} fill="#84b060" />
        </g>
        <g filter="url(#bl2)">
          <polygon points={band(-3, -.074, 3, .07, 125)} fill="url(#yellowIn)" />
        </g>
        <g filter="url(#bl1_5)">
          <polygon points={band(-2.500, -.085, 2.500, .072, 0, 165)} fill="#a48c3c" />
        </g>
        <g filter="url(#bl2_5)">
          <polygon points={band(-1, -.064, 1, .056, 0)} fill="url(#core)" />
        </g>
        <g filter="url(#bl3)">
          <ellipse cx="128" cy="-1" rx="26" ry="5" fill="#403c62" opacity=".75" />
        </g>
        <g filter="url(#bl1)" fill="none" stroke="url(#stripIn)" strokeWidth="4.500">
          <polygon points="125,-9 640,-42.500 640,-43 125,-9.500" />
          <polygon points="125,7.500 640,38 640,38.500 125,8" />
        </g>
      </g>
      <g filter="url(#bl1)" fill="none">
        <path d="M1137 732L1255 657" stroke="#e4a41c" strokeWidth="4.500" opacity=".85" />
        <path d="M1244 732l11 -8" stroke="#e4a41c" strokeWidth="4" opacity=".85" />
      </g>
    </g>

    <g fill="none" strokeWidth="1">
      <path d="M914.500 502L981.700 591.500V652L921 732M1232 502L1165.700 591.500V652L1225 732" stroke="#eef2e0" />
      <path d="M960 502L1028 591.500V652L967 732M1187 502L1119.500 591.500V652L1179 732" stroke="#b8b8b4" />
    </g>
    <path d="M947 502Q1073 464 1198 502Z" fill="#f3f3f3" stroke="#b8b8b8" strokeWidth="1.200" />
    <path d="M955 732.500Q1073 768 1191 732.500Z" fill="#f3f3f3" stroke="#b8b8b8" strokeWidth="1.200" />
    <path d="M500 502H949M1198 502H1255" stroke="#222" strokeWidth="1.200" />
    <path d="M8 732.500H955M1191 732.500H1255" stroke="#111" strokeWidth="1.200" />
    <path d="M656 387L782 502L1186 732L1255 694.500" fill="none" stroke="#f00" strokeWidth=".9" />
    <text x="805" y="258" fontFamily="Liberation Sans" fontSize="28.300" fill="#111">UT Probe</text>
  </svg>
);

export default function App() {
  return (
    <Win>
      <Global />
      <TitleBar>
        <AppBadge>BT</AppBadge>
        <TitleText>BeamTool 7 - C:\Users\pclark\Documents\ESBeamTool\Butt Weld Sample Conventional Coverage.ebwk</TitleText>
        <CapBtn $w={30}><I w={16} h={11}><rect x=".5" y=".5" width="9" height="10" fill="#8a9cb0" stroke="#55677c" /><rect x="9.500" y="3.500" width="6" height="4" fill="#fff" stroke="#55677c" /></I></CapBtn>
        <CapBtn $ml={25}><I w={12} h={6}><rect x=".5" y=".5" width="11" height="4" rx="1" fill="#fff" stroke="#5b6d83" /></I></CapBtn>
        <CapBtn><I w={10} h={10}><rect x="1" y="1" width="8" height="8" fill="none" stroke="#33485f" strokeWidth="1.500" /><rect x="3" y="3" width="4" height="4" fill="#fff" /></I></CapBtn>
        <CapBtn $close><I w={12} h={10}><path d="M2 1l8 8M10 1l-8 8" stroke="#fff" strokeWidth="2.800" /></I></CapBtn>
      </TitleBar>
      <Body>
        <MenuBar>
          <MenuItem $mr={19}>File</MenuItem>
          <MenuItem $mr={20}>Edit</MenuItem>
          <MenuItem $mr={20}>Drawings</MenuItem>
          <MenuItem>Tools</MenuItem>
          <MenuItem>Help</MenuItem>
        </MenuBar>
        <Toolbar>
          <ToolCell $w={22}><NewDoc /></ToolCell>
          <ToolCell $w={24}><OpenFolder /></ToolCell>
          <ToolCell $w={39}><Save /></ToolCell>
          <ToolCell $w={20}><Undo /></ToolCell>
          <ToolCell $w={12}><Caret /></ToolCell>
          <ToolCell $w={20}><Redo /></ToolCell>
          <ToolCell $w={25}><Caret $c="#aaa" /></ToolCell>
          <ToolCell $w={95}><SubjectIco /><ToolLabel $ml={2}>Subject</ToolLabel><Caret $ml={8} /></ToolCell>
          <ToolCell $w={83}><PieceIco /><ToolLabel $ml={1}>Piece</ToolLabel><Caret $ml={12} /></ToolCell>
          <ToolCell $w={74}><WeldIco /><ToolLabel $ml={1}>Weld</ToolLabel></ToolCell>
          <ToolCell $w={103}><InstrumentIco /><ToolLabel $ml={2}>Instrument</ToolLabel><Caret $ml={11} /></ToolCell>
          <ToolCell $w={87}><ProbeIco /><ToolLabel $ml={1}>Probe</ToolLabel><Caret $ml={6} /></ToolCell>
          <ToolCell $w={23}><NotesIco /></ToolCell>
          <ToolCell $w={23}><BookIco /></ToolCell>
          <ToolCell $w={22}><ChartIco /></ToolCell>
          <ToolCell $w={53}><CameraIco /><Caret $ml={5} /></ToolCell>
          <ToolCell $w={250}><PlayIco /><ToolLabel>Animations</ToolLabel><Caret $ml={10} /></ToolCell>
          <ToolCell $w={40}><LayerIco /><Caret $ml={2} /></ToolCell>
          <ActiveCell><Cube /></ActiveCell>
          <ToolCell $w={23}><Cube front="#dce8f4" top="#4a7cb0" side="#3a6a9c" /></ToolCell>
          <ToolCell $w={37}><Cube front="#eef4fa" top="#eef4fa" side="#eef4fa" stroke="#5a86b4" /></ToolCell>
          <ToolCell $w={23}><Hand size={17} color="#555" fill="#fff" strokeWidth={1.6} /></ToolCell>
          <ToolCell $w={23}><Magnifier ring="#5a78a8"><path d="M7 3v8M3 7h8" stroke="#2a4ca0" strokeWidth="1.400" /></Magnifier></ToolCell>
          <ToolCell $w={23}><Magnifier><rect x="4" y="4" width="6" height="6" fill="none" stroke="#5a78a8" /></Magnifier></ToolCell>
          <ToolCell $w={23}><Magnifier><g fill="#1a3ad0"><circle cx="4.500" cy="5" r="1.200" /><circle cx="9" cy="4" r="1.200" /><circle cx="10" cy="8" r="1.200" /><circle cx="5.500" cy="10" r="1.200" /></g></Magnifier></ToolCell>
          <ToolCell $w={23}><Magnifier><path d="M7 3.500v7M3.500 7h7" stroke="#2a5ca0" strokeWidth="2" /></Magnifier></ToolCell>
          <ToolCell $w={17}><Magnifier><path d="M3.500 7h7" stroke="#2a5ca0" strokeWidth="2" /></Magnifier></ToolCell>
        </Toolbar>
        <ProbeBar>
          <ProbeCard>
            <ProbeHead><UTBadge>UT</UTBadge><ProbeName>UT Probe</ProbeName></ProbeHead>
            <ProbeRow>
              <Arrows1 />
              <Pill $ml={1}><PillValue>-31.40</PillValue></Pill>
              <ProbeGap $w={5} /><Arrows2 />
              <Pill $ml={0}><PillValue>0.00</PillValue></Pill>
              <ProbeGap $w={5} /><Arrows3 />
              <Pill $ml={0}><PillValue>0.00</PillValue></Pill>
            </ProbeRow>
          </ProbeCard>
        </ProbeBar>
        <Strip />
        <Canvas><Drawing /></Canvas>
        <Ribbon>
          <RGroup $w={590}>
            <RContent>
              <GeomRows>
                <GeomRow $g={11}>
                  <GeomDraw d="M2 2l3 12 3-12 4 12" nodes={[[2, 2], [12, 14]]} />
                  <GeomDraw d="M2 14C3 6 8 2 14 2" nodes={[[2, 14], [14, 2]]} />
                  <I w={20} h={15}><path d="M2 2h14M2 2v11M16 2v11" fill="none" stroke="#333" /><rect x="0" y="0" width="3" height="3" fill="#3f78b8" /><rect x="15" y="0" width="3" height="3" fill="#3f78b8" /><rect x="0" y="12" width="3" height="3" fill="#3f78b8" /><rect x="15" y="12" width="3" height="3" fill="#3f78b8" /></I>
                </GeomRow>
                <GeomRow>
                  <GeomDraw d="M2 3h8l4 6v5H2z" nodes={[[2, 3], [10, 3], [14, 9], [14, 14], [2, 14]]} />
                  <I w={16} h={15}><rect x="1.500" y="1.500" width="13" height="12" fill="#dce8f4" stroke="#333" /><rect x="0" y="0" width="3" height="3" fill="#3f78b8" /><rect x="13" y="12" width="3" height="3" fill="#3f78b8" /></I>
                  <Sv width="16" height="15" viewBox="0 0 16 15"><rect x=".5" y=".5" width="13" height="13" fill="#fff" stroke="#222" /><text x="3" y="12" fontFamily="Liberation Serif" fontWeight="700" fontSize="11" fill="#1c3a90">A</text><rect x="12" y="12" width="3" height="3" fill="#3f78b8" /></Sv>
                </GeomRow>
              </GeomRows>
            </RContent>
            <RLabel $pl={408}>Geometry</RLabel>
          </RGroup>
          <RGroup $w={271}>
            <RContent>
              <RSub $w={157} $pt={3}>
                <RHead><LineIco />Line</RHead>
                <DropRow>
                  <RDrop><Bars /><Caret $c="#333" /></RDrop>
                  <RDrop><Dashes /><Caret $c="#333" /></RDrop>
                  <RDrop><Ball /><Caret $c="#333" /></RDrop>
                </DropRow>
                <DropRow>
                  <RDrop><NodeLine /><Caret $c="#333" /></RDrop>
                  <RDrop><NodeMid /><Caret $c="#333" /></RDrop>
                </DropRow>
              </RSub>
              <RSub $w={57} $pt={2}>
                <RHead><FillIco />&nbsp;Fill</RHead>
                <DropRow><RDrop><Ball /><Caret $c="#333" /></RDrop></DropRow>
              </RSub>
              <RSub $w={56} $end $pl={5} $pt={2}>
                <RHead><TextIco />Text</RHead>
                <RDrop><Ball /><Caret $c="#333" /></RDrop>
                <RDrop><AZ /><Caret $c="#333" /></RDrop>
              </RSub>
            </RContent>
            <RLabel>Style<Launcher /></RLabel>
          </RGroup>
          <RGroup $w={372}>
            <RContent>
              <LockCol>
                <LockRow><LockBtn><IBeamLock /></LockBtn><NumBox>0</NumBox></LockRow>
                <LockRow><LockBtn><TriLock /></LockBtn><NumBox>0</NumBox></LockRow>
                <LockRow><LockBtn><ListIco /></LockBtn><NumBox $off /></LockRow>
              </LockCol>
              <PencilCell><StarPencil /></PencilCell>
              <SubSep />
              <AidGrid>
                <ArrowRight /><AidBox /><ArrowBoth /><AidBox />
                <ArrowUp /><AidBox /><ArrowUD /><AidBox />
              </AidGrid>
              <Bracket><LockChip><Lock /></LockChip></Bracket>
              <Dial><Protractor /><DialValue>0.0</DialValue></Dial>
              <GridBox>{Array.from({ length: 9 }, (_, i) => <GridCell key={i} />)}</GridBox>
            </RContent>
            <RLabel>Construction Aids</RLabel>
          </RGroup>
        </Ribbon>
        <StatusBar>
          <CoordIco />
          <StatusText>-58.00 , 22.00</StatusText>
          <UnitPill>mm</UnitPill>
          <Grip />
        </StatusBar>
      </Body>
      <BottomFrame />

      <Panel>
        <PanelTitle>
          Position A Configuration
          <CloseX><I w={9} h={8}><path d="M1 0l7 8M8 0L1 8" stroke="#3d4a58" strokeWidth="1.400" /></I></CloseX>
        </PanelTitle>
        <PanelBody>
          <ImportBar>
            <Folder2 /><BarLabel>Import</BarLabel><Export /><BarLabel>Export</BarLabel>
            <HelpDot>?</HelpDot>
          </ImportBar>
          <SectionHead>
            <Toggle><ToggleMark $open /></Toggle>
            <BeamIco />
            <SectionTitle>Beam</SectionTitle>
            <HeadTools>
              <BtnGroup><ToolBtn $on><FanIco /></ToolBtn><ToolBtn><SigIco /></ToolBtn></BtnGroup>
              <ToolBtn $single $w={28}><VIco /><Caret /></ToolBtn>
              <ToolBtn $single $w={29}><WaveIco /><Caret /></ToolBtn>
              <ToolBtn $single><RedH /></ToolBtn>
              <BtnGroup><ToolBtn $on><ConeA /></ToolBtn><ToolBtn><ConeB /></ToolBtn></BtnGroup>
              <ToolBtn $single><Cross /></ToolBtn>
              <BtnGroup><ToolBtn><VBoxA /></ToolBtn><ToolBtn><VBoxB /></ToolBtn></BtnGroup>
              <ToolBtn $single $w={29}><RaysIco /><Caret /></ToolBtn>
            </HeadTools>
          </SectionHead>
          <Rows $pt={1}>
            <SliderRow label="Crop Skips" x={183} v="2" />
            <SliderRow label="Gate Start" x={130} v="5.0" />
            <SliderRow label="Gate Length" x={130} v="5.0" />
            <Row>
              <Label>dB Drop</Label>
              <Mid>
                <Pill $ml={0} $w={61}><PillValue>-12</PillValue><RightTri /></Pill>
                <SideLabel>Beam Spread</SideLabel>
              </Mid>
              <Pill><PillValue>5.36</PillValue></Pill>
              <Unit>°</Unit>
            </Row>
            <ValueRow label="Near Field" v="53.67" unit="mm" />
          </Rows>
          <ColorRow $h={25}>
            <Pencil />
            <ColorBtn><Wheel /><Swatch $c="#f00" /><Spacer /><Caret $c="#444" /></ColorBtn>
            <Bucket />
            <ColorBtn $w={55}><Wheel /><SwatchHalf $c="#ffa500" /><Spacer /><Caret $c="#444" /></ColorBtn>
            <OpacityIco />
            <MiniSlider><Thumb style={{ left: "7px" }} /></MiniSlider>
          </ColorRow>
          <SectionHead>
            <Toggle><ToggleMark $open /></Toggle>
            <TransducerIco />
            <SectionTitle>Transducer</SectionTitle>
            <HeadTools><ToolBtn $single $w={29}><TransTool /><Caret /></ToolBtn></HeadTools>
          </SectionHead>
          <Rows $pt={2}>
            <Row $h={28}>
              <Label>Part Number</Label>
              <TextField $w={331} defaultValue="A541S-SM" />
            </Row>
            <Row $h={18}>
              <Label>Shape</Label>
              <ChoiceRow>
                <Radio><RadioDot /></Radio><ChoiceText>Round</ChoiceText>
                <Check /><ChoiceText>Square</ChoiceText>
              </ChoiceRow>
            </Row>
            <SliderRow label="Frequency" x={172} v="5.00" unit="MHz" />
            <SliderRow label="Height" x={222} v="12.70" unit="mm" />
            <SliderRow label="Diameter" x={229} v="12.70" unit="mm" />
            <SliderRow label="Length" x={113} v="" unit="mm" off />
            <SliderRow label="Channel" x={117} v="1" />
            <ValueRow label="Total Aperture" v="126.68" unit="mm" />
          </Rows>
          <ColorRow $h={24}>
            <Pencil />
            <ColorBtn><Wheel /><Swatch $c="#000" /><Spacer /><Caret $c="#444" /></ColorBtn>
            <Bucket />
            <ColorBtn $w={55}><Wheel /><Swatch $c="#fff" /><Spacer /><Caret $c="#444" /></ColorBtn>
          </ColorRow>
          <SectionHead $h={31}>
            <Toggle><ToggleMark $open /></Toggle>
            <WedgeBtn><WedgeIco /><SectionTitle $ml={3}>Wedge</SectionTitle><Caret $ml={4} /></WedgeBtn>
            <HeadTools>
              <ToolBtn $single $w={29}><SoundIco /><Caret /></ToolBtn>
              <ToolBtn $single $w={29}><WedgeTool /><Caret /></ToolBtn>
            </HeadTools>
          </SectionHead>
          <Rows $pt={5}>
            <Row $h={21}>
              <Label>Part Number</Label>
              <TextField $w={339} $h={20} defaultValue="ABWM-5T-60" />
            </Row>
            <SliderRow pl={7} h={21} base={115} label="Velocity" x={167} v="2.730" unit="mm/µs" />
            <SliderRow label="Length" x={210} v="42.16" unit="mm" />
            <SliderRow label="Exit Point" x={152} v="16.00" unit="mm" />
            <SliderRow label="Inset / Outset" x={181} v="4.78" unit="mm" />
            <SliderRow label="Width" x={187} v="31.75" unit="mm" />
            <SliderRow label="Front Height" x={184} v="25.40" unit="mm" />
            <SliderRow label="Back Height" x={143} v="5.99" unit="mm" />
            <SliderRow label="Wedge Angle" x={258} v="48.00" unit="°" />
            <SliderRow label="Refracted Angle" x={294} v="60.27" unit="°" />
          </Rows>
          <ColorRow $h={26} $pt={4}>
            <Pencil />
            <ColorBtn><Wheel /><Swatch $c="#000" /><Spacer /><Caret $c="#444" /></ColorBtn>
            <Bucket />
            <ColorBtn $w={55}><Wheel /><SwatchHalf $c="#0000ff" /><Spacer /><Caret $c="#444" /></ColorBtn>
          </ColorRow>
          <SectionHead $h={29} $box>
            <Toggle><ToggleMark /></Toggle>
            <SigIco />
            <SectionTitle>Acquisition</SectionTitle>
          </SectionHead>
        </PanelBody>
        <BottomFrame />
      </Panel>
    </Win>
  );
}
